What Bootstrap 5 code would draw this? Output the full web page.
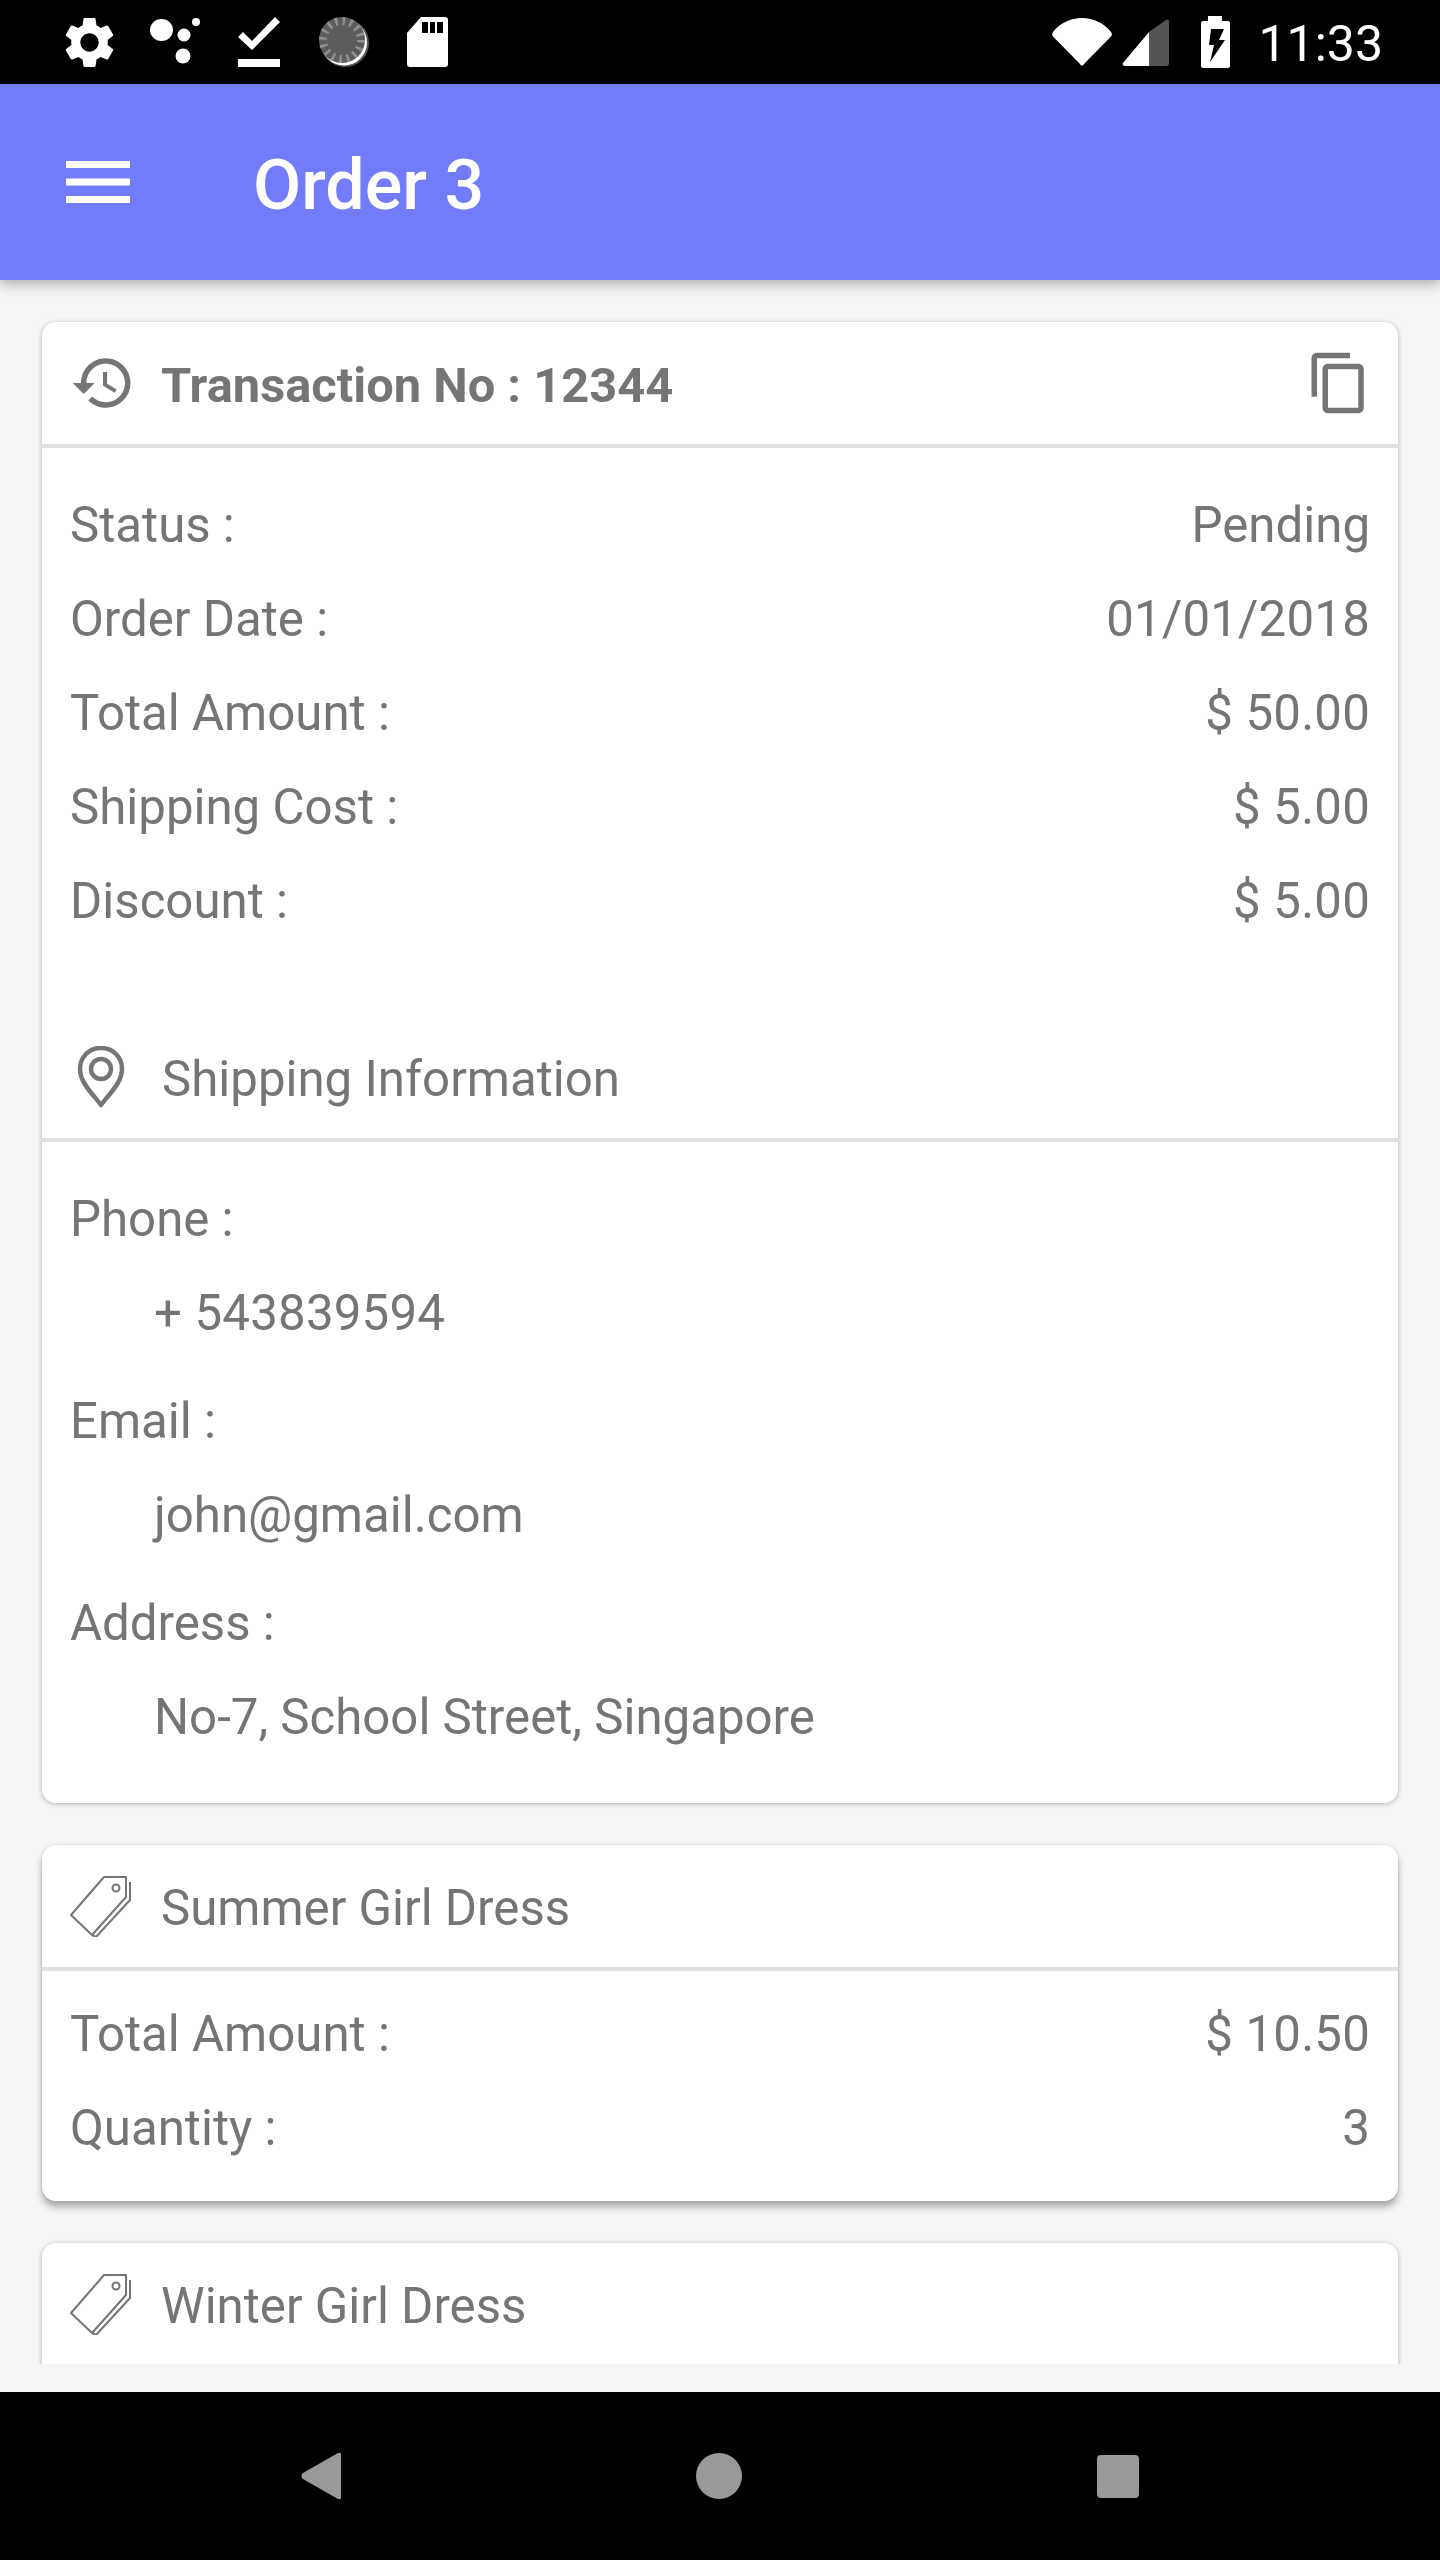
<!DOCTYPE html>
<html lang="en">
<head>
    <meta charset="UTF-8">
    <meta name="viewport" content="width=device-width, initial-scale=1.0">
    <title>Order 3</title>
    <link href="https://cdn.jsdelivr.net/npm/bootstrap@5.3.0/dist/css/bootstrap.min.css" rel="stylesheet">
    <style>
        body {
            font-family: Roboto, "Liberation Sans", sans-serif;
            color: #757575;
            background-color: #f5f5f5;
        }
        .phone-screen {
            width: 1440px;
            height: 2560px;
            overflow: hidden;
        }
        .status-strip {
            height: 84px;
            flex: 0 0 84px;
            background-color: #000;
            color: #fff;
            padding: 0 57px 0 59px;
        }
        .status-strip svg { display: block; }
        .status-left { gap: 38px; }
        .status-gear { margin-right: -8px; }
        .status-signal { margin-left: 10px; }
        .status-batt { margin-left: 32px; }
        .status-time {
            font-size: 50px;
            line-height: 1;
            margin-left: 28px;
            margin-top: 4px;
        }
        .app-bar {
            height: 196px;
            flex: 0 0 196px;
            background-color: #727cfb;
            color: #fff;
            padding-left: 66px;
            box-shadow: 0 4px 12px rgba(0, 0, 0, .3);
            position: relative;
            z-index: 2;
        }
        .app-title {
            font-size: 70px;
            font-weight: 500;
            margin: 6px 0 0 123px;
            line-height: 1;
        }
        .scroll-area {
            flex: 1 1 auto;
            min-height: 0;
            overflow: hidden;
            margin-bottom: 28px;
            padding: 42px 42px 0;
        }
        .order-card {
            border: 0;
            border-radius: 14px;
            background-color: #fff;
            box-shadow: 0 1px 5px rgba(0, 0, 0, .28);
            margin-bottom: 42px;
            font-size: 49.2px;
        }
        .order-card.raised { box-shadow: 0 6px 7px rgba(0, 0, 0, .3), 0 0 3px rgba(0, 0, 0, .12); }
        .cut-card { min-height: 300px; }
        .order-head {
            height: 126px;
            padding: 0 26px 0 28px;
            background: none;
            border: 0;
            border-bottom: 4px solid #e0e0e0;
            border-radius: 0;
        }
        .order-head:first-child { border-radius: 14px 14px 0 0; }
        .head-icon {
            width: 62px;
            height: 62px;
            flex: 0 0 62px;
            margin-right: 30px;
        }
        .head-icon-wide { margin-left: -1px; }
        .head-icon-history {
            width: 66px;
            height: 66px;
            flex: 0 0 66px;
            margin-right: 25px;
        }
        .head-label { padding-top: 6px; }
        .head-bold { font-weight: 700; font-size: 48.8px; }
        .first-body { padding: 29px 28px 69px 28px; }
        .info-body { padding: 29px 28px 40px 28px; }
        .item-body { padding: 15px 28px 27px 28px; }
        .info-row { height: 94px; padding-top: 3px; }
        .info-value { padding: 3px 0 0 84px; height: 94px; }
        .info-label-gap { margin-top: 14px; }
        .digits { letter-spacing: .2px; }
        .nav-strip {
            height: 168px;
            flex: 0 0 168px;
            gap: 355px;
            background-color: #000;
        }
    </style>
</head>
<body class="m-0">
    <div class="phone-screen d-flex flex-column">

        <!-- status bar -->
        <div class="status-strip d-flex align-items-center justify-content-between">
            <div class="status-left d-flex align-items-center">
                <svg class="status-gear" width="61" height="61" viewBox="0 0 24 24" fill="#fff"><path d="M19.14,12.94c.04-.3.06-.61.06-.94 0-.32-.02-.64-.07-.94l2.03-1.58a.49.49 0 0 0 .12-.61l-1.92-3.32a.488.488 0 0 0-.59-.22l-2.39.96c-.5-.38-1.03-.7-1.62-.94l-.36-2.54a.484.484 0 0 0-.48-.41h-3.84c-.24 0-.43.17-.47.41l-.36 2.54c-.59.24-1.13.57-1.62.94l-2.39-.96c-.22-.08-.47 0-.59.22L2.74 8.87c-.12.21-.08.47.12.61l2.03 1.58c-.05.3-.09.63-.09.94s.02.64.07.94l-2.03 1.58a.49.49 0 0 0-.12.61l1.92 3.32c.12.22.37.29.59.22l2.39-.96c.5.38 1.03.7 1.62.94l.36 2.54c.05.24.24.41.48.41h3.84c.24 0 .44-.17.47-.41l.36-2.54c.59-.24 1.13-.56 1.62-.94l2.39.96c.22.08.47 0 .59-.22l1.92-3.32c.12-.22.07-.47-.12-.61l-2.01-1.58zM12 15.6c-1.98 0-3.6-1.62-3.6-3.6s1.62-3.6 3.6-3.6 3.6 1.62 3.6 3.6-1.62 3.6-3.6 3.6z"/></svg>
                <svg width="50" height="50" viewBox="0 0 50 50" fill="#fff"><ellipse cx="11.500" cy="13" rx="11.500" ry="11"/><circle cx="34" cy="18" r="6.500"/><circle cx="46" cy="5" r="4"/><circle cx="33" cy="39" r="7.500"/></svg>
                <svg width="43" height="50" viewBox="0 0 43 50" fill="#fff"><path d="M0 42h42v8H0zM14 33 0 20l5-5 9 9L37 0l5 5z"/></svg>
                <svg width="50" height="50" viewBox="0 0 50 50"><circle cx="26" cy="26" r="24" fill="#555"/><circle cx="25" cy="25.500" r="23" fill="#fff"/><circle cx="23" cy="23" r="23" fill="#5c5c5c"/><circle cx="23" cy="23" r="19" fill="none" stroke="#8f8f8f" stroke-width="8" stroke-dasharray="2.600 4.860"/></svg>
                <svg width="41" height="50" viewBox="0 0 41 50"><path d="M14 0h24c2 0 3 1 3 3v44c0 2-1 3-3 3H3c-2 0-3-1-3-3V16z" fill="#fff"/><path d="M15 5h6v11h-6zM23 5h5v11h-5zM30 5h6v11h-6z" fill="#000"/></svg>
            </div>
            <div class="d-flex align-items-center">
                <svg width="60" height="48" viewBox="0 0 60 48"><path d="M1 14C8 5 19 0 30 0s22 5 29 14c1 1 1 3 .5 4L32 46c-1 2-3 2-4 0L.5 18C0 17 0 15 1 14z" fill="#fff"/></svg>
                <svg class="status-signal" width="47" height="47" viewBox="0 0 47 47"><path d="M27 47H3c-2 0-3-2-2-3L27 13z" fill="#fff"/><path d="M27 47V13L44 1c2-1 3 0 3 2v41c0 2-1 3-3 3z" fill="#555"/></svg>
                <svg class="status-batt" width="29" height="52" viewBox="0 0 29 52"><path d="M7 0h14v5h6c1 0 2 1 2 2v43c0 1-1 2-2 2H2c-1 0-2-1-2-2V7c0-1 1-2 2-2h5z" fill="#fff"/><path d="M10 13h13l-5 11h6L9 46l4-17H8z" fill="#000"/></svg>
                <span class="status-time">11:33</span>
            </div>
        </div>

        <!-- app bar -->
        <nav class="app-bar d-flex align-items-center">
            <svg width="64" height="42" viewBox="0 0 64 42" fill="#fff"><rect width="64" height="7"/><rect y="17.500" width="64" height="7"/><rect y="35" width="64" height="7"/></svg>
            <h1 class="app-title">Order 3</h1>
        </nav>

        <!-- content -->
        <main class="scroll-area">
            <div class="card order-card">
                <div class="card-header order-head d-flex align-items-center">
                    <svg class="head-icon-history" viewBox="0 0 24 24" fill="#757575"><path d="M13 3c-4.970 0-9 4.030-9 9H1l3.890 3.890.07.140L9 12H6c0-3.870 3.130-7 7-7s7 3.130 7 7-3.130 7-7 7c-1.930 0-3.680-.79-4.940-2.060l-1.420 1.420C8.270 19.990 10.510 21 13 21c4.970 0 9-4.030 9-9s-4.030-9-9-9zm-1 5v5l4.280 2.540.72-1.210-3.500-2.080V8H12z"/></svg>
                    <span class="head-label head-bold flex-grow-1">Transaction No : 12344</span>
                    <svg width="66" height="66" viewBox="0 0 24 24" fill="#757575"><path d="M16 1H4c-1.100 0-2 .9-2 2v14h2V3h12V1zm3 4H8c-1.100 0-2 .9-2 2v14c0 1.100.9 2 2 2h11c1.100 0 2-.9 2-2V7c0-1.100-.9-2-2-2zm0 16H8V7h11v14z"/></svg>
                </div>
                <div class="first-body">
                    <div class="info-row d-flex justify-content-between align-items-center"><span>Status :</span><span>Pending</span></div>
                    <div class="info-row d-flex justify-content-between align-items-center"><span>Order Date :</span><span class="digits">01/01/2018</span></div>
                    <div class="info-row d-flex justify-content-between align-items-center"><span>Total Amount :</span><span class="digits">$ 50.00</span></div>
                    <div class="info-row d-flex justify-content-between align-items-center"><span>Shipping Cost :</span><span class="digits">$ 5.00</span></div>
                    <div class="info-row d-flex justify-content-between align-items-center"><span>Discount :</span><span class="digits">$ 5.00</span></div>
                </div>
                <div class="order-head d-flex align-items-center">
                    <svg class="head-icon" viewBox="0 0 62 62" fill="none" stroke="#757575" stroke-width="4.500"><path d="M31 59 C23 48 10 37 10 23 C10 11 19 2 31 2 C43 2 52 11 52 23 C52 37 39 48 31 59z" stroke-linejoin="round"/><circle cx="31" cy="23" r="10"/></svg>
                    <span class="head-label">Shipping Information</span>
                </div>
                <div class="info-body">
                    <div class="info-row d-flex align-items-center">Phone :</div>
                    <div class="info-value digits d-flex align-items-center">+ 543839594</div>
                    <div class="info-row info-label-gap d-flex align-items-center">Email :</div>
                    <div class="info-value d-flex align-items-center">john@gmail.com</div>
                    <div class="info-row info-label-gap d-flex align-items-center">Address :</div>
                    <div class="info-value d-flex align-items-center">No-7, School Street, Singapore</div>
                </div>
            </div>

            <div class="card order-card raised">
                <div class="card-header order-head d-flex align-items-center">
                    <svg class="head-icon head-icon-wide" viewBox="0 0 62 62" fill="none" stroke="#757575" stroke-width="2"><path d="M35 2h22v20L23 60 2 40z" stroke-linejoin="round"/><circle cx="47" cy="13" r="3.500"/><path d="M61 7v18L27 62l-4-2"/></svg>
                    <span class="head-label">Summer Girl Dress</span>
                </div>
                <div class="item-body">
                    <div class="info-row d-flex justify-content-between align-items-center"><span>Total Amount :</span><span class="digits">$ 10.50</span></div>
                    <div class="info-row d-flex justify-content-between align-items-center"><span>Quantity :</span><span>3</span></div>
                </div>
            </div>

            <div class="card order-card cut-card">
                <div class="card-header order-head d-flex align-items-center">
                    <svg class="head-icon head-icon-wide" viewBox="0 0 62 62" fill="none" stroke="#757575" stroke-width="2"><path d="M35 2h22v20L23 60 2 40z" stroke-linejoin="round"/><circle cx="47" cy="13" r="3.500"/><path d="M61 7v18L27 62l-4-2"/></svg>
                    <span class="head-label">Winter Girl Dress</span>
                </div>
            </div>
        </main>

        <!-- android nav -->
        <div class="nav-strip d-flex justify-content-center align-items-center">
            <svg width="40" height="46" viewBox="0 0 40 46" fill="#999"><path d="M37 0c2-1 3 0 3 2v42c0 2-1 3-3 2L2 26c-2-1-2-5 0-6z"/></svg>
            <svg width="46" height="46" viewBox="0 0 46 46" fill="#999"><circle cx="23" cy="23" r="23"/></svg>
            <svg width="42" height="43" viewBox="0 0 42 43" fill="#999"><rect width="42" height="43" rx="4"/></svg>
        </div>
    </div>
    <script src="https://cdn.jsdelivr.net/npm/bootstrap@5.3.0/dist/js/bootstrap.bundle.min.js"></script>
</body>
</html>
